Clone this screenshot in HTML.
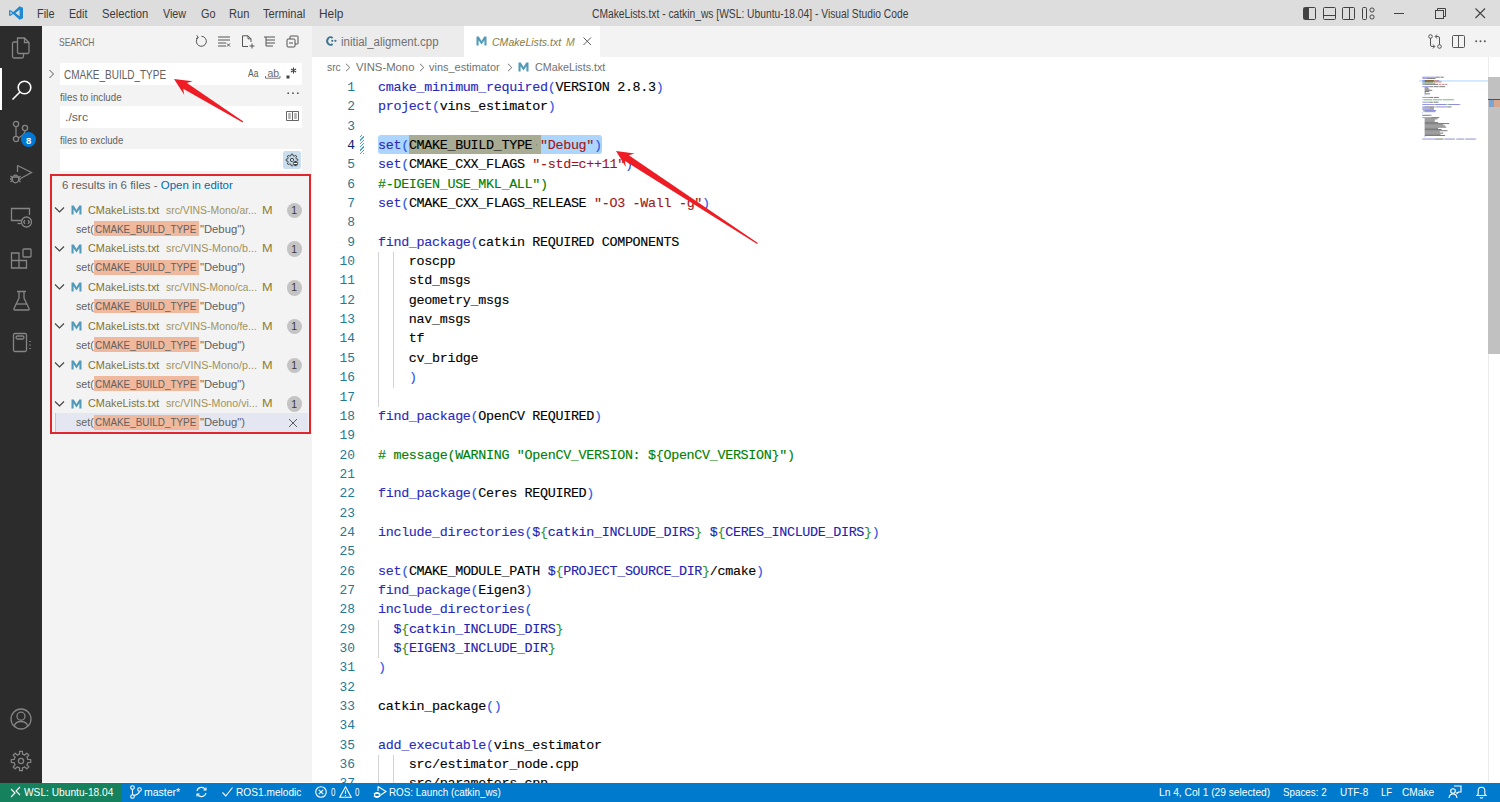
<!DOCTYPE html><html><head><meta charset="utf-8"><style>
*{margin:0;padding:0;box-sizing:border-box}
html,body{width:1500px;height:802px;overflow:hidden;background:#fff;font-family:"Liberation Sans",sans-serif}
.a{position:absolute}
.t{position:absolute;white-space:nowrap}
svg{position:absolute;overflow:visible}
#title{left:0;top:0;width:1500px;height:26px;background:#dddddd}
.menu{top:6px;font-size:12px;color:#3b3b3b}
#act{left:0;top:26px;width:42px;height:757px;background:#2c2c2c}
#side{left:42px;top:26px;width:270px;height:756px;background:#f3f3f3}
#tabs{left:312px;top:26px;width:1188px;height:31px;background:#f3f3f3}
#editor{left:312px;top:57px;width:1188px;height:725px;background:#fff}
#status{left:0;top:783px;width:1500px;height:19px;background:#007acc}
.st{top:785px;font-size:11.5px;color:#fff}
.code{position:absolute;left:378px;top:78px;font-family:"Liberation Mono",monospace;font-size:13.4px;letter-spacing:-0.3208px;line-height:19.35px;white-space:pre;color:#000;-webkit-text-stroke:0.12px currentColor}
.ln{position:absolute;left:312px;width:43px;top:78px;font-family:"Liberation Mono",monospace;font-size:12.87px;line-height:19.35px;white-space:pre;color:#237893;text-align:right}
.f{color:#2a2abb}
.p{color:#2f55e8}
.s{color:#a31515}
.c{color:#008000}
.v{color:#2323b0}
.g{color:#319331}
.sb{font-size:12px;color:#616161}
.fn{font-size:12px;color:#895503}
.path{font-size:11px;color:#8a7a45}
.mt{font-size:12px;color:#616161}
.hl{background:#f5c0a0}
</style></head><body>
<div id="title" class="a"></div>
<svg style="left:8px;top:5px" width="16" height="16" viewBox="0 0 16 16"><path d="M11.6 1.2 L15 2.8 V13.2 L11.6 14.8 L5.2 8.9 L2.3 11.1 L1 10.4 V5.6 L2.3 4.9 L5.2 7.1 Z M11.6 4.8 L7.4 8 L11.6 11.2 Z M2.4 6.3 V9.7 L4.1 8 Z" fill="#1f8ad2"/></svg>
<span class="t" style="left:37.39px;top:6.70px;font-size:12px;color:#3b3b3b;transform:scaleX(0.9111);transform-origin:0 0;">File</span>
<span class="t" style="left:69.01px;top:6.70px;font-size:12px;color:#3b3b3b;transform:scaleX(0.8900);transform-origin:0 0;">Edit</span>
<span class="t" style="left:101.76px;top:6.70px;font-size:12px;color:#3b3b3b;transform:scaleX(0.9375);transform-origin:0 0;">Selection</span>
<span class="t" style="left:162.70px;top:6.70px;font-size:12px;color:#3b3b3b;transform:scaleX(0.8962);transform-origin:0 0;">View</span>
<span class="t" style="left:200.50px;top:6.70px;font-size:12px;color:#3b3b3b;transform:scaleX(0.9062);transform-origin:0 0;">Go</span>
<span class="t" style="left:228.67px;top:6.70px;font-size:12px;color:#3b3b3b;transform:scaleX(0.9250);transform-origin:0 0;">Run</span>
<span class="t" style="left:263.20px;top:6.70px;font-size:12px;color:#3b3b3b;transform:scaleX(0.9289);transform-origin:0 0;">Terminal</span>
<span class="t" style="left:319.01px;top:6.70px;font-size:12px;color:#3b3b3b;transform:scaleX(0.9913);transform-origin:0 0;">Help</span>
<span class="t" style="left:591.60px;top:6.70px;font-size:12px;color:#3b3b3b;transform:scaleX(0.8551);transform-origin:0 0;">CMakeLists.txt - catkin_ws [WSL: Ubuntu-18.04] - Visual Studio Code</span>
<svg style="left:1303px;top:7px" width="13" height="13"><rect x="0.5" y="0.5" width="12" height="12" rx="1" fill="none" stroke="#424242"/><rect x="1" y="1" width="5" height="11" fill="#424242"/></svg>
<svg style="left:1323px;top:7px" width="13" height="13"><rect x="0.5" y="0.5" width="12" height="12" rx="1" fill="none" stroke="#424242"/><line x1="1" y1="8.5" x2="12" y2="8.5" stroke="#424242"/></svg>
<svg style="left:1342px;top:7px" width="13" height="13"><rect x="0.5" y="0.5" width="12" height="12" rx="1" fill="none" stroke="#424242"/><line x1="7.5" y1="1" x2="7.5" y2="12" stroke="#424242"/></svg>
<svg style="left:1362px;top:7px" width="13" height="13"><rect x="0.5" y="0.5" width="4" height="12" rx="1" fill="none" stroke="#424242"/><rect x="8" y="1" width="4" height="4" rx="1.8" fill="none" stroke="#424242"/><rect x="8" y="8" width="4" height="4" rx="1.8" fill="none" stroke="#424242"/></svg>
<svg style="left:1394px;top:13px" width="11" height="2"><line x1="0" y1="0.5" x2="10" y2="0.5" stroke="#424242"/></svg>
<svg style="left:1435px;top:8px" width="12" height="12"><rect x="0.5" y="2.5" width="8" height="8" fill="none" stroke="#424242"/><path d="M2.5 2.5 V0.5 H10.5 V8.5 H8.5" fill="none" stroke="#424242"/></svg>
<svg style="left:1475px;top:8px" width="11" height="11"><path d="M0.5 0.5 L10 10 M10 0.5 L0.5 10" stroke="#424242" stroke-width="1.1"/></svg>
<div id="act" class="a"></div>
<svg style="left:11px;top:37px" width="20" height="22" viewBox="0 0 20 22" fill="none" stroke="#858585" stroke-width="1.3"><path d="M6.5 1 H13.5 L18 5.5 V15 Q18 16.5 16.5 16.5 H8 Q6.5 16.5 6.5 15 Z"/><path d="M13.5 1 V5.5 H18"/><path d="M6.5 5 H3 Q1.5 5 1.5 6.5 V19.5 Q1.5 21 3 21 H11 Q12.5 21 12.5 19.5 V16.5"/></svg>
<div class="a" style="left:0;top:68px;width:2px;height:42px;background:#fff"></div>
<svg style="left:11px;top:79px" width="22" height="22" viewBox="0 0 22 22" fill="none" stroke="#fff" stroke-width="1.6"><circle cx="13.5" cy="8.5" r="6.3"/><line x1="9" y1="13" x2="1.5" y2="20.5"/></svg>
<svg style="left:11px;top:119px" width="22" height="24" viewBox="0 0 22 24" fill="none" stroke="#858585" stroke-width="1.3"><circle cx="5" cy="5" r="2.6"/><circle cx="14" cy="9" r="2.6"/><circle cx="5" cy="20" r="2.6"/><line x1="5" y1="7.6" x2="5" y2="17.4"/><path d="M14 11.6 Q14 15.5 7.5 19"/></svg>
<div class="a" style="left:21px;top:132px;width:15px;height:15px;border-radius:50%;background:#0078d4"></div>
<span class="t" style="left:26.00px;top:134.50px;font-size:9.5px;color:#fff;font-weight:bold;">8</span>
<svg style="left:9px;top:162px" width="26" height="24" viewBox="0 0 26 24" fill="none" stroke="#858585" stroke-width="1.3"><path d="M8.5 3.5 L22.5 10.5 L11.5 16.5"/><path d="M8.5 3.5 V10"/><ellipse cx="6.5" cy="17" rx="3.2" ry="3.8"/><path d="M3.3 15 H9.7 M1.5 14 L3.3 15.5 M1.5 20 L3.3 18.5 M11.5 14 L9.7 15.5 M11.5 20 L9.7 18.5 M1 17 H3.3 M9.7 17 H12"/></svg>
<svg style="left:10px;top:207px" width="24" height="22" viewBox="0 0 24 22" fill="none" stroke="#858585" stroke-width="1.3"><path d="M12 13.5 H1.5 V1.5 H19.5 V8"/><path d="M7.5 16.5 H11"/><circle cx="16.5" cy="15" r="5"/><path d="M15 13.2 L13.7 15 L15 16.8 M18 13.2 L19.3 15 L18 16.8"/></svg>
<svg style="left:10px;top:247px" width="24" height="24" viewBox="0 0 24 24" fill="none" stroke="#858585" stroke-width="1.3"><path d="M1.5 6 H9 V13.5 H16.5 V21 H1.5 Z M1.5 13.5 H9 V21"/><rect x="13" y="2" width="8" height="8" rx="0.8"/></svg>
<svg style="left:12px;top:290px" width="20" height="22" viewBox="0 0 20 22" fill="none" stroke="#858585" stroke-width="1.3"><path d="M5 1.5 H14 M7 1.5 V8 L2 18.5 Q1.5 20 3 20 H16 Q17.5 20 17 18.5 L12 8 V1.5"/><path d="M4 14 H15"/></svg>
<svg style="left:12px;top:332px" width="22" height="22" viewBox="0 0 22 22" fill="none" stroke="#858585" stroke-width="1.3"><rect x="1.5" y="1.5" width="13" height="18" rx="1.5"/><rect x="4" y="4" width="8" height="3" rx="1.5"/><path d="M18 9 V10 M18 12.5 V13.5 M18 16 V17" stroke-width="1.6"/></svg>
<svg style="left:10px;top:708px" width="22" height="22" viewBox="0 0 22 22" fill="none" stroke="#858585" stroke-width="1.3"><circle cx="11" cy="11" r="10"/><circle cx="11" cy="8.2" r="4"/><path d="M4.3 17.8 Q5.5 13.5 11 13.5 Q16.5 13.5 17.7 17.8"/></svg>
<svg style="left:10px;top:750px" width="22" height="22" viewBox="0 0 22 22" fill="none" stroke="#858585" stroke-width="1.3"><polygon points="8.32,4.53 9.47,4.17 9.62,1.30 12.38,1.30 12.53,4.17 13.68,4.53 14.75,5.09 16.88,3.16 18.84,5.12 16.91,7.25 17.47,8.32 17.83,9.47 20.70,9.62 20.70,12.38 17.83,12.53 17.47,13.68 16.91,14.75 18.84,16.88 16.88,18.84 14.75,16.91 13.68,17.47 12.53,17.83 12.38,20.70 9.62,20.70 9.47,17.83 8.32,17.47 7.25,16.91 5.12,18.84 3.16,16.88 5.09,14.75 4.53,13.68 4.17,12.53 1.30,12.38 1.30,9.62 4.17,9.47 4.53,8.32 5.09,7.25 3.16,5.12 5.12,3.16 7.25,5.09" stroke-linejoin="round"/><circle cx="11" cy="11" r="2.6"/></svg>
<div id="side" class="a"></div>
<span class="t" style="left:59.19px;top:35.70px;font-size:10.5px;color:#6f6f6f;transform:scaleX(0.8119);transform-origin:0 0;">SEARCH</span>
<svg style="left:195px;top:35px" width="13" height="13" viewBox="0 0 13 13" fill="none" stroke="#555555" stroke-width="1"><path d="M3 2.6 A5 5 0 1 0 6.5 1.3"/><path d="M1.8 0.3 L3.3 2.6 L1 3.6"/></svg>
<svg style="left:217px;top:36px" width="14" height="12" viewBox="0 0 14 12" fill="none" stroke="#555555" stroke-width="1"><path d="M1 1 H13 M1 4 H13 M1 7 H9 M1 10 H9 M10 7.5 L13 10.5 M13 7.5 L10 10.5"/></svg>
<svg style="left:241px;top:35px" width="14" height="14" viewBox="0 0 14 14" fill="none" stroke="#555555" stroke-width="1"><path d="M7 11.5 H1.5 V0.8 H7 L10 3.8 V7"/><path d="M7 0.8 V3.8 H10"/><path d="M11 8.5 V13.5 M8.5 11 H13.5"/></svg>
<svg style="left:263px;top:36px" width="13" height="12" viewBox="0 0 13 12" fill="none" stroke="#555555" stroke-width="1"><path d="M1 1 H12 M3 4 H12 M3 7 H12 M3 10 H10 M3 1 V10"/></svg>
<svg style="left:286px;top:35px" width="13" height="13" viewBox="0 0 13 13" fill="none" stroke="#555555" stroke-width="1"><rect x="1" y="4" width="8" height="8" rx="1"/><path d="M4 4 V1.5 Q4 1 4.5 1 H11.5 Q12 1 12 1.5 V8.5 Q12 9 11.5 9 H9"/><path d="M3 8 H7"/></svg>
<svg style="left:48px;top:69px" width="7" height="10" viewBox="0 0 7 10" fill="none" stroke="#555555" stroke-width="1"><path d="M1.5 1 L5.5 5 L1.5 9"/></svg>
<div class="a" style="left:60px;top:63px;width:242px;height:22px;background:#fff"></div>
<span class="t" style="left:64.40px;top:67.90px;font-size:12px;color:#616161;transform:scaleX(0.8320);transform-origin:0 0;">CMAKE_BUILD_TYPE</span>
<span class="t" style="left:248.40px;top:67.00px;font-size:11px;color:#5a5a5a;transform:scaleX(0.7692);transform-origin:0 0;">Aa</span>
<svg style="left:265px;top:67px" width="16" height="13" viewBox="0 0 16 13"><text x="2.5" y="9.5" font-family="Liberation Sans" font-size="10.5" fill="#6a6a6a">ab</text><path d="M0.5 9 V11.2 H15 V9" fill="none" stroke="#6a6a6a" stroke-width="0.9"/></svg>
<svg style="left:286px;top:66px" width="12" height="14" viewBox="0 0 12 14"><rect x="0.5" y="9.5" width="3" height="3" fill="#424242"/><path d="M7.5 1.5 V7.5 M4.9 3 L10.1 6 M10.1 3 L4.9 6" stroke="#424242" stroke-width="1.1"/></svg>
<svg style="left:287px;top:92px" width="12" height="3"><circle cx="1.2" cy="1.2" r="0.9" fill="#555555"/><circle cx="6" cy="1.2" r="0.9" fill="#555555"/><circle cx="10.8" cy="1.2" r="0.9" fill="#555555"/></svg>
<span class="t" style="left:60.10px;top:91.60px;font-size:10px;color:#616161;transform:scaleX(0.9714);transform-origin:0 0;">files to include</span>
<div class="a" style="left:60px;top:106px;width:242px;height:22px;background:#fff"></div>
<span class="t" style="left:64.84px;top:111.20px;font-size:10.5px;color:#616161;transform:scaleX(1.1611);transform-origin:0 0;">./src</span>
<svg style="left:285.5px;top:111px" width="13" height="10" viewBox="0 0 13 10" fill="none" stroke="#555555" stroke-width="0.9"><path d="M0.5 0.5 H6 Q6.5 0.5 6.5 1 Q6.5 0.5 7 0.5 H12.5 V9.5 H0.5 Z M6.5 1 V9.5"/><path d="M2.2 3 H4.8 M2.2 5 H4.8 M2.2 7 H4.8 M8.2 3 H10.8 M8.2 5 H10.8 M8.2 7 H10.8"/></svg>
<span class="t" style="left:60.00px;top:135.00px;font-size:10px;color:#616161;transform:scaleX(0.9561);transform-origin:0 0;">files to exclude</span>
<div class="a" style="left:60px;top:149px;width:242px;height:22px;background:#fff"></div>
<div class="a" style="left:283px;top:151px;width:18px;height:18px;background:#c9dff0;border-radius:2px"></div>
<svg style="left:285px;top:153px" width="14" height="14" viewBox="0 0 14 14" fill="none" stroke="#424242" stroke-width="1"><polygon points="6.41,1.03 7.59,1.03 8.25,2.89 9.03,3.21 10.81,2.36 11.64,3.19 10.79,4.97 11.11,5.75 12.97,6.41 12.97,7.59 11.11,8.25 10.79,9.03 11.64,10.81 10.81,11.64 9.03,10.79 8.25,11.11 7.59,12.97 6.41,12.97 5.75,11.11 4.97,10.79 3.19,11.64 2.36,10.81 3.21,9.03 2.89,8.25 1.03,7.59 1.03,6.41 2.89,5.75 3.21,4.97 2.36,3.19 3.19,2.36 4.97,3.21 5.75,2.89"/><circle cx="7" cy="7" r="1.7"/><circle cx="10.5" cy="10.5" r="3" fill="#424242" stroke="#c9dff0"/><path d="M8.8 10.5 H12.2" stroke="#fff"/></svg>
<span class="t" style="left:61.70px;top:178.90px;font-size:10.5px;color:#616161;transform:scaleX(1.0917);transform-origin:0 0;">6 results in 6 files - <span style="color:#006ab1">Open in editor</span></span>
<svg style="left:54px;top:206.00px" width="11" height="8" viewBox="0 0 11 8" fill="none" stroke="#424242" stroke-width="1.1"><path d="M1 1.5 L5.5 6 L10 1.5"/></svg>
<svg style="left:71px;top:205.00px" width="11" height="10" viewBox="0 0 11 10"><path d="M0.5 9.5 V0.5 H2.7 L5.5 5 L8.3 0.5 H10.5 V9.5 H8.4 V4.2 L5.5 8.5 L2.6 4.2 V9.5 Z" fill="#519aba"/></svg>
<span class="t" style="left:88.10px;top:203.70px;font-size:10.5px;color:#847433;transform:scaleX(1.0362);transform-origin:0 0;">CMakeLists.txt</span>
<span class="t" style="left:165.50px;top:204.70px;font-size:10px;color:#a0925c;transform:scaleX(1.0402);transform-origin:0 0;">src/VINS-Mono/ar...</span>
<span class="t" style="left:262.29px;top:203.70px;font-size:10.5px;color:#8f7d2e;transform:scaleX(1.2143);transform-origin:0 0;">M</span>
<div class="a" style="left:286.5px;top:202.70px;width:15.5px;height:15.5px;border-radius:50%;background:#c4c4c4"></div>
<span class="t" style="left:291.20px;top:204.00px;font-size:10.5px;color:#3a3a3a;">1</span>
<div class="a" style="left:93.8px;top:221.30px;width:105.7px;height:14.8px;background:#f0b99e"></div>
<span class="t" style="left:76.00px;top:222.70px;font-size:10.5px;color:#616161;transform:scaleX(1.0176);transform-origin:0 0;">set(</span>
<span class="t" style="left:94.60px;top:222.70px;font-size:10.5px;color:#616161;transform:scaleX(0.9430);transform-origin:0 0;">CMAKE_BUILD_TYPE</span>
<span class="t" style="left:200.00px;top:222.70px;font-size:10.5px;color:#616161;transform:scaleX(1.0714);transform-origin:0 0;">"Debug")</span>
<svg style="left:54px;top:244.70px" width="11" height="8" viewBox="0 0 11 8" fill="none" stroke="#424242" stroke-width="1.1"><path d="M1 1.5 L5.5 6 L10 1.5"/></svg>
<svg style="left:71px;top:243.70px" width="11" height="10" viewBox="0 0 11 10"><path d="M0.5 9.5 V0.5 H2.7 L5.5 5 L8.3 0.5 H10.5 V9.5 H8.4 V4.2 L5.5 8.5 L2.6 4.2 V9.5 Z" fill="#519aba"/></svg>
<span class="t" style="left:88.10px;top:242.40px;font-size:10.5px;color:#847433;transform:scaleX(1.0362);transform-origin:0 0;">CMakeLists.txt</span>
<span class="t" style="left:165.50px;top:243.40px;font-size:10px;color:#a0925c;transform:scaleX(1.0774);transform-origin:0 0;">src/VINS-Mono/b...</span>
<span class="t" style="left:262.29px;top:242.40px;font-size:10.5px;color:#8f7d2e;transform:scaleX(1.2143);transform-origin:0 0;">M</span>
<div class="a" style="left:286.5px;top:241.40px;width:15.5px;height:15.5px;border-radius:50%;background:#c4c4c4"></div>
<span class="t" style="left:291.20px;top:242.70px;font-size:10.5px;color:#3a3a3a;">1</span>
<div class="a" style="left:93.8px;top:260.00px;width:105.7px;height:14.8px;background:#f0b99e"></div>
<span class="t" style="left:76.00px;top:261.40px;font-size:10.5px;color:#616161;transform:scaleX(1.0176);transform-origin:0 0;">set(</span>
<span class="t" style="left:94.60px;top:261.40px;font-size:10.5px;color:#616161;transform:scaleX(0.9430);transform-origin:0 0;">CMAKE_BUILD_TYPE</span>
<span class="t" style="left:200.00px;top:261.40px;font-size:10.5px;color:#616161;transform:scaleX(1.0714);transform-origin:0 0;">"Debug")</span>
<svg style="left:54px;top:283.40px" width="11" height="8" viewBox="0 0 11 8" fill="none" stroke="#424242" stroke-width="1.1"><path d="M1 1.5 L5.5 6 L10 1.5"/></svg>
<svg style="left:71px;top:282.40px" width="11" height="10" viewBox="0 0 11 10"><path d="M0.5 9.5 V0.5 H2.7 L5.5 5 L8.3 0.5 H10.5 V9.5 H8.4 V4.2 L5.5 8.5 L2.6 4.2 V9.5 Z" fill="#519aba"/></svg>
<span class="t" style="left:88.10px;top:281.10px;font-size:10.5px;color:#847433;transform:scaleX(1.0362);transform-origin:0 0;">CMakeLists.txt</span>
<span class="t" style="left:165.50px;top:282.10px;font-size:10px;color:#a0925c;transform:scaleX(1.0169);transform-origin:0 0;">src/VINS-Mono/ca...</span>
<span class="t" style="left:262.29px;top:281.10px;font-size:10.5px;color:#8f7d2e;transform:scaleX(1.2143);transform-origin:0 0;">M</span>
<div class="a" style="left:286.5px;top:280.10px;width:15.5px;height:15.5px;border-radius:50%;background:#c4c4c4"></div>
<span class="t" style="left:291.20px;top:281.40px;font-size:10.5px;color:#3a3a3a;">1</span>
<div class="a" style="left:93.8px;top:298.70px;width:105.7px;height:14.8px;background:#f0b99e"></div>
<span class="t" style="left:76.00px;top:300.10px;font-size:10.5px;color:#616161;transform:scaleX(1.0176);transform-origin:0 0;">set(</span>
<span class="t" style="left:94.60px;top:300.10px;font-size:10.5px;color:#616161;transform:scaleX(0.9430);transform-origin:0 0;">CMAKE_BUILD_TYPE</span>
<span class="t" style="left:200.00px;top:300.10px;font-size:10.5px;color:#616161;transform:scaleX(1.0714);transform-origin:0 0;">"Debug")</span>
<svg style="left:54px;top:322.10px" width="11" height="8" viewBox="0 0 11 8" fill="none" stroke="#424242" stroke-width="1.1"><path d="M1 1.5 L5.5 6 L10 1.5"/></svg>
<svg style="left:71px;top:321.10px" width="11" height="10" viewBox="0 0 11 10"><path d="M0.5 9.5 V0.5 H2.7 L5.5 5 L8.3 0.5 H10.5 V9.5 H8.4 V4.2 L5.5 8.5 L2.6 4.2 V9.5 Z" fill="#519aba"/></svg>
<span class="t" style="left:88.10px;top:319.80px;font-size:10.5px;color:#847433;transform:scaleX(1.0362);transform-origin:0 0;">CMakeLists.txt</span>
<span class="t" style="left:165.50px;top:320.80px;font-size:10px;color:#a0925c;transform:scaleX(1.0402);transform-origin:0 0;">src/VINS-Mono/fe...</span>
<span class="t" style="left:262.29px;top:319.80px;font-size:10.5px;color:#8f7d2e;transform:scaleX(1.2143);transform-origin:0 0;">M</span>
<div class="a" style="left:286.5px;top:318.80px;width:15.5px;height:15.5px;border-radius:50%;background:#c4c4c4"></div>
<span class="t" style="left:291.20px;top:320.10px;font-size:10.5px;color:#3a3a3a;">1</span>
<div class="a" style="left:93.8px;top:337.40px;width:105.7px;height:14.8px;background:#f0b99e"></div>
<span class="t" style="left:76.00px;top:338.80px;font-size:10.5px;color:#616161;transform:scaleX(1.0176);transform-origin:0 0;">set(</span>
<span class="t" style="left:94.60px;top:338.80px;font-size:10.5px;color:#616161;transform:scaleX(0.9430);transform-origin:0 0;">CMAKE_BUILD_TYPE</span>
<span class="t" style="left:200.00px;top:338.80px;font-size:10.5px;color:#616161;transform:scaleX(1.0714);transform-origin:0 0;">"Debug")</span>
<svg style="left:54px;top:360.80px" width="11" height="8" viewBox="0 0 11 8" fill="none" stroke="#424242" stroke-width="1.1"><path d="M1 1.5 L5.5 6 L10 1.5"/></svg>
<svg style="left:71px;top:359.80px" width="11" height="10" viewBox="0 0 11 10"><path d="M0.5 9.5 V0.5 H2.7 L5.5 5 L8.3 0.5 H10.5 V9.5 H8.4 V4.2 L5.5 8.5 L2.6 4.2 V9.5 Z" fill="#519aba"/></svg>
<span class="t" style="left:88.10px;top:358.50px;font-size:10.5px;color:#847433;transform:scaleX(1.0362);transform-origin:0 0;">CMakeLists.txt</span>
<span class="t" style="left:165.50px;top:359.50px;font-size:10px;color:#a0925c;transform:scaleX(1.0774);transform-origin:0 0;">src/VINS-Mono/p...</span>
<span class="t" style="left:262.29px;top:358.50px;font-size:10.5px;color:#8f7d2e;transform:scaleX(1.2143);transform-origin:0 0;">M</span>
<div class="a" style="left:286.5px;top:357.50px;width:15.5px;height:15.5px;border-radius:50%;background:#c4c4c4"></div>
<span class="t" style="left:291.20px;top:358.80px;font-size:10.5px;color:#3a3a3a;">1</span>
<div class="a" style="left:93.8px;top:376.10px;width:105.7px;height:14.8px;background:#f0b99e"></div>
<span class="t" style="left:76.00px;top:377.50px;font-size:10.5px;color:#616161;transform:scaleX(1.0176);transform-origin:0 0;">set(</span>
<span class="t" style="left:94.60px;top:377.50px;font-size:10.5px;color:#616161;transform:scaleX(0.9430);transform-origin:0 0;">CMAKE_BUILD_TYPE</span>
<span class="t" style="left:200.00px;top:377.50px;font-size:10.5px;color:#616161;transform:scaleX(1.0714);transform-origin:0 0;">"Debug")</span>
<div class="a" style="left:55px;top:413px;width:253px;height:19px;background:#e4e6f1"></div>
<svg style="left:54px;top:399.50px" width="11" height="8" viewBox="0 0 11 8" fill="none" stroke="#424242" stroke-width="1.1"><path d="M1 1.5 L5.5 6 L10 1.5"/></svg>
<svg style="left:71px;top:398.50px" width="11" height="10" viewBox="0 0 11 10"><path d="M0.5 9.5 V0.5 H2.7 L5.5 5 L8.3 0.5 H10.5 V9.5 H8.4 V4.2 L5.5 8.5 L2.6 4.2 V9.5 Z" fill="#519aba"/></svg>
<span class="t" style="left:88.10px;top:397.20px;font-size:10.5px;color:#847433;transform:scaleX(1.0362);transform-origin:0 0;">CMakeLists.txt</span>
<span class="t" style="left:165.50px;top:398.20px;font-size:10px;color:#a0925c;transform:scaleX(1.0647);transform-origin:0 0;">src/VINS-Mono/vi...</span>
<span class="t" style="left:262.29px;top:397.20px;font-size:10.5px;color:#8f7d2e;transform:scaleX(1.2143);transform-origin:0 0;">M</span>
<div class="a" style="left:286.5px;top:396.20px;width:15.5px;height:15.5px;border-radius:50%;background:#c4c4c4"></div>
<span class="t" style="left:291.20px;top:397.50px;font-size:10.5px;color:#3a3a3a;">1</span>
<div class="a" style="left:93.8px;top:414.80px;width:105.7px;height:14.8px;background:#f0b99e"></div>
<span class="t" style="left:76.00px;top:416.20px;font-size:10.5px;color:#616161;transform:scaleX(1.0176);transform-origin:0 0;">set(</span>
<span class="t" style="left:94.60px;top:416.20px;font-size:10.5px;color:#616161;transform:scaleX(0.9430);transform-origin:0 0;">CMAKE_BUILD_TYPE</span>
<span class="t" style="left:200.00px;top:416.20px;font-size:10.5px;color:#616161;transform:scaleX(1.0714);transform-origin:0 0;">"Debug")</span>
<svg style="left:288px;top:417.85px" width="10" height="10" viewBox="0 0 10 10" fill="none" stroke="#555" stroke-width="0.95"><path d="M1 1 L9 9 M9 1 L1 9"/></svg>
<div class="a" style="left:50px;top:174px;width:261px;height:260px;border:2px solid #e0262d"></div>
<div id="tabs" class="a"></div>
<div class="a" style="left:312px;top:26px;width:152px;height:31px;background:#ececec"></div>
<div class="a" style="left:464px;top:26px;width:136px;height:31px;background:#fff"></div>
<svg style="left:326px;top:36px" width="12" height="10" viewBox="0 0 12 10"><path d="M6.6 2 A3.3 3.9 0 1 0 6.6 8" fill="none" stroke="#3f7590" stroke-width="1.9"/><circle cx="6.3" cy="4.8" r="1.1" fill="#3f7590"/><circle cx="9.4" cy="4.8" r="1.1" fill="#3f7590"/></svg>
<span class="t" style="left:340.54px;top:35.20px;font-size:12px;color:#717171;transform:scaleX(0.9554);transform-origin:0 0;">initial_aligment.cpp</span>
<svg style="left:476px;top:36px" width="11" height="10" viewBox="0 0 11 10"><path d="M0.5 9.5 V0.5 H2.7 L5.5 5 L8.3 0.5 H10.5 V9.5 H8.4 V4.2 L5.5 8.5 L2.6 4.2 V9.5 Z" fill="#519aba"/></svg>
<span class="t" style="left:491.58px;top:36.10px;font-size:11.5px;color:#877a48;font-style:italic;transform:scaleX(0.9173);transform-origin:0 0;">CMakeLists.txt</span>
<span class="t" style="left:566.00px;top:36.10px;font-size:11.5px;color:#9a8a45;font-style:italic;transform:scaleX(0.9200);transform-origin:0 0;">M</span>
<svg style="left:583px;top:37px" width="9" height="9" viewBox="0 0 9 9" fill="none" stroke="#555" stroke-width="0.95"><path d="M0.5 0.5 L8 8 M8 0.5 L0.5 8"/></svg>
<svg style="left:1428px;top:34px" width="14" height="15" viewBox="0 0 14 15" fill="none" stroke="#555555" stroke-width="1"><circle cx="2.5" cy="2.5" r="1.8"/><circle cx="11.5" cy="12.5" r="1.8"/><path d="M2.5 4.3 V11 Q2.5 12.5 4 12.5 H6.5 M5 10.5 L6.8 12.5 L5 14.5"/><path d="M11.5 10.7 V4 Q11.5 2.5 10 2.5 H7.5 M9 0.5 L7.2 2.5 L9 4.5"/></svg>
<svg style="left:1452px;top:35px" width="13" height="13" viewBox="0 0 13 13" fill="none" stroke="#555555" stroke-width="1"><rect x="0.5" y="0.5" width="12" height="12" rx="1"/><path d="M6.5 0.5 V12.5"/></svg>
<svg style="left:1475px;top:40px" width="11" height="3"><circle cx="1.2" cy="1.2" r="1" fill="#555555"/><circle cx="5.5" cy="1.2" r="1" fill="#555555"/><circle cx="9.8" cy="1.2" r="1" fill="#555555"/></svg>
<div id="editor" class="a"></div>
<span class="t" style="left:327.00px;top:61.30px;font-size:11.5px;color:#717171;transform:scaleX(0.9000);transform-origin:0 0;">src</span>
<svg style="left:345px;top:63px" width="6" height="9" viewBox="0 0 6 9" fill="none" stroke="#717171" stroke-width="1"><path d="M1 0.8 L4.8 4.5 L1 8.2"/></svg>
<svg style="left:419px;top:63px" width="6" height="9" viewBox="0 0 6 9" fill="none" stroke="#717171" stroke-width="1"><path d="M1 0.8 L4.8 4.5 L1 8.2"/></svg>
<svg style="left:507px;top:63px" width="6" height="9" viewBox="0 0 6 9" fill="none" stroke="#717171" stroke-width="1"><path d="M1 0.8 L4.8 4.5 L1 8.2"/></svg>
<span class="t" style="left:356.00px;top:61.30px;font-size:11.5px;color:#717171;transform:scaleX(0.9831);transform-origin:0 0;">VINS-Mono</span>
<span class="t" style="left:429.00px;top:61.30px;font-size:11.5px;color:#717171;transform:scaleX(0.9527);transform-origin:0 0;">vins_estimator</span>
<svg style="left:518px;top:62px" width="11" height="10" viewBox="0 0 11 10"><path d="M0.5 9.5 V0.5 H2.7 L5.5 5 L8.3 0.5 H10.5 V9.5 H8.4 V4.2 L5.5 8.5 L2.6 4.2 V9.5 Z" fill="#519aba"/></svg>
<span class="t" style="left:534.70px;top:61.30px;font-size:11.5px;color:#717171;transform:scaleX(0.9329);transform-origin:0 0;">CMakeLists.txt</span>
<div class="a" style="left:378px;top:135.05px;width:224px;height:19.35px;background:#add6ff;border-radius:3px"></div>
<div class="a" style="left:409px;top:135.05px;width:132px;height:19.35px;background:#a8ac94"></div>
<div class="a" style="left:535.5px;top:144.45px;width:1.6px;height:1.6px;background:#8a8a7a;border-radius:50%"></div>
<div class="a" style="left:55px;top:413px;width:1px;height:19px;background:#c8c8c8"></div>
<div class="a" style="left:359.5px;top:135.05px;width:4px;height:19.35px;background:repeating-linear-gradient(-45deg,#4aa3cf 0 1px,#fff 1px 2.4px)"></div>
<div class="a" style="left:378px;top:252.15px;width:1px;height:154.80px;background:#d3d3d3"></div>
<div class="a" style="left:393px;top:252.15px;width:1px;height:135.45px;background:#d3d3d3"></div>
<div class="a" style="left:378px;top:619.80px;width:1px;height:38.70px;background:#d3d3d3"></div>
<div class="a" style="left:378px;top:755.25px;width:1px;height:38.70px;background:#d3d3d3"></div>
<div class="a" style="left:393px;top:755.25px;width:1px;height:38.70px;background:#d3d3d3"></div>
<div class="ln">1
2
3
<span style="color:#0b216f">4</span>
5
6
7
8
9
10
11
12
13
14
15
16
17
18
19
20
21
22
23
24
25
26
27
28
29
30
31
32
33
34
35
36
37</div>
<div class="code"><span class="f">cmake_minimum_required</span><span class="p">(</span>VERSION 2.8.3<span class="p">)</span>
<span class="f">project</span><span class="p">(</span>vins_estimator<span class="p">)</span>

<span class="f">set</span><span class="p">(</span>CMAKE_BUILD_TYPE <span class="s">"Debug"</span><span class="p">)</span>
<span class="f">set</span><span class="p">(</span>CMAKE_CXX_FLAGS <span class="s">"-std=c++11"</span><span class="p">)</span>
<span class="c">#-DEIGEN_USE_MKL_ALL")</span>
<span class="f">set</span><span class="p">(</span>CMAKE_CXX_FLAGS_RELEASE <span class="s">"-O3 -Wall -g"</span><span class="p">)</span>

<span class="f">find_package</span><span class="p">(</span>catkin REQUIRED COMPONENTS
    roscpp
    std_msgs
    geometry_msgs
    nav_msgs
    tf
    cv_bridge
    <span class="p">)</span>

<span class="f">find_package</span><span class="p">(</span>OpenCV REQUIRED<span class="p">)</span>

<span class="c"># message(WARNING "OpenCV_VERSION: ${OpenCV_VERSION}")</span>

<span class="f">find_package</span><span class="p">(</span>Ceres REQUIRED<span class="p">)</span>

<span class="f">include_directories</span><span class="p">(</span><span class="v">$<span class="g">{</span>catkin_INCLUDE_DIRS<span class="g">}</span></span> <span class="v">$<span class="g">{</span>CERES_INCLUDE_DIRS<span class="g">}</span></span><span class="p">)</span>

<span class="f">set</span><span class="p">(</span>CMAKE_MODULE_PATH <span class="v">$<span class="g">{</span>PROJECT_SOURCE_DIR<span class="g">}</span></span>/cmake<span class="p">)</span>
<span class="f">find_package</span><span class="p">(</span>Eigen3<span class="p">)</span>
<span class="f">include_directories</span><span class="p">(</span>
  <span class="v">$<span class="g">{</span>catkin_INCLUDE_DIRS<span class="g">}</span></span>
  <span class="v">$<span class="g">{</span>EIGEN3_INCLUDE_DIR<span class="g">}</span></span>
<span class="p">)</span>

catkin_package<span class="p">()</span>

<span class="f">add_executable</span><span class="p">(</span>vins_estimator
    src/estimator_node.cpp
    src/parameters.cpp</div>
<div class="a" style="left:1488px;top:57px;width:1px;height:725px;background:#ececec"></div>
<div class="a" style="left:1488px;top:77px;width:12px;height:277px;background:#c1c1c1"></div>
<svg style="left:0;top:0" width="1500" height="802"><rect x="1419" y="80.17" width="69" height="1.49" fill="#add6ff" opacity="0.7"/><rect x="1424.64" y="80.17" width="9.95" height="1.49" fill="#e8a040" opacity="0.9"/><rect x="1422.30" y="76.70" width="12.87" height="0.95" fill="#3434c8" opacity="0.55"/><rect x="1435.17" y="76.70" width="0.58" height="0.95" fill="#0431fa" opacity="0.55"/><rect x="1435.75" y="76.70" width="4.09" height="0.95" fill="#000000" opacity="0.55"/><rect x="1440.43" y="76.70" width="2.92" height="0.95" fill="#000000" opacity="0.55"/><rect x="1443.36" y="76.70" width="0.58" height="0.95" fill="#0431fa" opacity="0.55"/><rect x="1422.30" y="77.89" width="4.09" height="0.95" fill="#3434c8" opacity="0.55"/><rect x="1426.39" y="77.89" width="0.58" height="0.95" fill="#0431fa" opacity="0.55"/><rect x="1426.98" y="77.89" width="8.19" height="0.95" fill="#000000" opacity="0.55"/><rect x="1435.17" y="77.89" width="0.58" height="0.95" fill="#0431fa" opacity="0.55"/><rect x="1422.30" y="80.27" width="1.75" height="0.95" fill="#3434c8" opacity="0.55"/><rect x="1424.06" y="80.27" width="0.58" height="0.95" fill="#0431fa" opacity="0.55"/><rect x="1424.64" y="80.27" width="9.36" height="0.95" fill="#000000" opacity="0.55"/><rect x="1434.59" y="80.27" width="4.09" height="0.95" fill="#a31515" opacity="0.55"/><rect x="1438.68" y="80.27" width="0.58" height="0.95" fill="#0431fa" opacity="0.55"/><rect x="1422.30" y="81.46" width="1.75" height="0.95" fill="#3434c8" opacity="0.55"/><rect x="1424.06" y="81.46" width="0.58" height="0.95" fill="#0431fa" opacity="0.55"/><rect x="1424.64" y="81.46" width="8.77" height="0.95" fill="#000000" opacity="0.55"/><rect x="1434.00" y="81.46" width="7.02" height="0.95" fill="#a31515" opacity="0.55"/><rect x="1441.02" y="81.46" width="0.58" height="0.95" fill="#0431fa" opacity="0.55"/><rect x="1422.30" y="82.65" width="12.87" height="0.95" fill="#008000" opacity="0.55"/><rect x="1422.30" y="83.84" width="1.75" height="0.95" fill="#3434c8" opacity="0.55"/><rect x="1424.06" y="83.84" width="0.58" height="0.95" fill="#0431fa" opacity="0.55"/><rect x="1424.64" y="83.84" width="13.45" height="0.95" fill="#000000" opacity="0.55"/><rect x="1438.68" y="83.84" width="2.34" height="0.95" fill="#a31515" opacity="0.55"/><rect x="1441.61" y="83.84" width="2.92" height="0.95" fill="#a31515" opacity="0.55"/><rect x="1445.12" y="83.84" width="1.75" height="0.95" fill="#a31515" opacity="0.55"/><rect x="1446.87" y="83.84" width="0.58" height="0.95" fill="#0431fa" opacity="0.55"/><rect x="1422.30" y="86.22" width="7.02" height="0.95" fill="#3434c8" opacity="0.55"/><rect x="1429.32" y="86.22" width="0.58" height="0.95" fill="#0431fa" opacity="0.55"/><rect x="1429.90" y="86.22" width="3.51" height="0.95" fill="#000000" opacity="0.55"/><rect x="1434.00" y="86.22" width="4.68" height="0.95" fill="#000000" opacity="0.55"/><rect x="1439.26" y="86.22" width="5.85" height="0.95" fill="#000000" opacity="0.55"/><rect x="1424.64" y="87.41" width="3.51" height="0.95" fill="#000000" opacity="0.55"/><rect x="1424.64" y="88.60" width="4.68" height="0.95" fill="#000000" opacity="0.55"/><rect x="1424.64" y="89.79" width="7.60" height="0.95" fill="#000000" opacity="0.55"/><rect x="1424.64" y="90.98" width="4.68" height="0.95" fill="#000000" opacity="0.55"/><rect x="1424.64" y="92.17" width="1.17" height="0.95" fill="#000000" opacity="0.55"/><rect x="1424.64" y="93.36" width="5.26" height="0.95" fill="#000000" opacity="0.55"/><rect x="1424.64" y="94.55" width="0.58" height="0.95" fill="#0431fa" opacity="0.55"/><rect x="1422.30" y="96.93" width="7.02" height="0.95" fill="#3434c8" opacity="0.55"/><rect x="1429.32" y="96.93" width="0.58" height="0.95" fill="#0431fa" opacity="0.55"/><rect x="1429.90" y="96.93" width="3.51" height="0.95" fill="#000000" opacity="0.55"/><rect x="1434.00" y="96.93" width="4.68" height="0.95" fill="#000000" opacity="0.55"/><rect x="1438.68" y="96.93" width="0.58" height="0.95" fill="#0431fa" opacity="0.55"/><rect x="1422.30" y="99.31" width="0.58" height="0.95" fill="#008000" opacity="0.55"/><rect x="1423.47" y="99.31" width="8.77" height="0.95" fill="#008000" opacity="0.55"/><rect x="1432.83" y="99.31" width="9.36" height="0.95" fill="#008000" opacity="0.55"/><rect x="1442.77" y="99.31" width="11.11" height="0.95" fill="#008000" opacity="0.55"/><rect x="1422.30" y="101.69" width="7.02" height="0.95" fill="#3434c8" opacity="0.55"/><rect x="1429.32" y="101.69" width="0.58" height="0.95" fill="#0431fa" opacity="0.55"/><rect x="1429.90" y="101.69" width="2.92" height="0.95" fill="#000000" opacity="0.55"/><rect x="1433.41" y="101.69" width="4.68" height="0.95" fill="#000000" opacity="0.55"/><rect x="1438.10" y="101.69" width="0.58" height="0.95" fill="#0431fa" opacity="0.55"/><rect x="1422.30" y="104.07" width="11.11" height="0.95" fill="#3434c8" opacity="0.55"/><rect x="1433.41" y="104.07" width="0.58" height="0.95" fill="#0431fa" opacity="0.55"/><rect x="1434.00" y="104.07" width="0.58" height="0.95" fill="#2323b0" opacity="0.55"/><rect x="1434.59" y="104.07" width="0.58" height="0.95" fill="#319331" opacity="0.55"/><rect x="1435.17" y="104.07" width="11.11" height="0.95" fill="#2323b0" opacity="0.55"/><rect x="1446.28" y="104.07" width="0.58" height="0.95" fill="#319331" opacity="0.55"/><rect x="1447.45" y="104.07" width="0.58" height="0.95" fill="#2323b0" opacity="0.55"/><rect x="1448.04" y="104.07" width="0.58" height="0.95" fill="#319331" opacity="0.55"/><rect x="1448.62" y="104.07" width="10.53" height="0.95" fill="#2323b0" opacity="0.55"/><rect x="1459.15" y="104.07" width="0.58" height="0.95" fill="#319331" opacity="0.55"/><rect x="1459.74" y="104.07" width="0.58" height="0.95" fill="#0431fa" opacity="0.55"/><rect x="1422.30" y="106.45" width="1.75" height="0.95" fill="#3434c8" opacity="0.55"/><rect x="1424.06" y="106.45" width="0.58" height="0.95" fill="#0431fa" opacity="0.55"/><rect x="1424.64" y="106.45" width="9.95" height="0.95" fill="#000000" opacity="0.55"/><rect x="1435.17" y="106.45" width="0.58" height="0.95" fill="#2323b0" opacity="0.55"/><rect x="1435.75" y="106.45" width="0.58" height="0.95" fill="#319331" opacity="0.55"/><rect x="1436.34" y="106.45" width="10.53" height="0.95" fill="#2323b0" opacity="0.55"/><rect x="1446.87" y="106.45" width="0.58" height="0.95" fill="#319331" opacity="0.55"/><rect x="1447.45" y="106.45" width="3.51" height="0.95" fill="#000000" opacity="0.55"/><rect x="1450.96" y="106.45" width="0.58" height="0.95" fill="#0431fa" opacity="0.55"/><rect x="1422.30" y="107.64" width="7.02" height="0.95" fill="#3434c8" opacity="0.55"/><rect x="1429.32" y="107.64" width="0.58" height="0.95" fill="#0431fa" opacity="0.55"/><rect x="1429.90" y="107.64" width="3.51" height="0.95" fill="#000000" opacity="0.55"/><rect x="1433.41" y="107.64" width="0.58" height="0.95" fill="#0431fa" opacity="0.55"/><rect x="1422.30" y="108.83" width="11.11" height="0.95" fill="#3434c8" opacity="0.55"/><rect x="1433.41" y="108.83" width="0.58" height="0.95" fill="#0431fa" opacity="0.55"/><rect x="1423.47" y="110.02" width="0.58" height="0.95" fill="#2323b0" opacity="0.55"/><rect x="1424.06" y="110.02" width="0.58" height="0.95" fill="#319331" opacity="0.55"/><rect x="1424.64" y="110.02" width="11.11" height="0.95" fill="#2323b0" opacity="0.55"/><rect x="1435.75" y="110.02" width="0.58" height="0.95" fill="#319331" opacity="0.55"/><rect x="1423.47" y="111.21" width="0.58" height="0.95" fill="#2323b0" opacity="0.55"/><rect x="1424.06" y="111.21" width="0.58" height="0.95" fill="#319331" opacity="0.55"/><rect x="1424.64" y="111.21" width="10.53" height="0.95" fill="#2323b0" opacity="0.55"/><rect x="1435.17" y="111.21" width="0.58" height="0.95" fill="#319331" opacity="0.55"/><rect x="1422.30" y="112.40" width="0.58" height="0.95" fill="#0431fa" opacity="0.55"/><rect x="1422.30" y="114.78" width="8.19" height="0.95" fill="#000000" opacity="0.55"/><rect x="1430.49" y="114.78" width="1.17" height="0.95" fill="#0431fa" opacity="0.55"/><rect x="1422.30" y="117.16" width="8.19" height="0.95" fill="#3434c8" opacity="0.55"/><rect x="1430.49" y="117.16" width="0.58" height="0.95" fill="#0431fa" opacity="0.55"/><rect x="1431.08" y="117.16" width="8.19" height="0.95" fill="#000000" opacity="0.55"/><rect x="1424.64" y="118.35" width="12.87" height="0.95" fill="#000000" opacity="0.55"/><rect x="1424.64" y="119.54" width="10.53" height="0.95" fill="#000000" opacity="0.55"/><rect x="1424.64" y="120.73" width="9.95" height="0.95" fill="#000000" opacity="0.55"/><rect x="1424.64" y="121.92" width="13.45" height="0.95" fill="#000000" opacity="0.55"/><rect x="1424.64" y="123.11" width="24.57" height="0.95" fill="#000000" opacity="0.55"/><rect x="1424.64" y="124.30" width="18.72" height="0.95" fill="#000000" opacity="0.55"/><rect x="1424.64" y="125.49" width="20.47" height="0.95" fill="#000000" opacity="0.55"/><rect x="1424.64" y="126.68" width="21.64" height="0.95" fill="#000000" opacity="0.55"/><rect x="1424.64" y="127.87" width="13.45" height="0.95" fill="#000000" opacity="0.55"/><rect x="1424.64" y="129.06" width="16.96" height="0.95" fill="#000000" opacity="0.55"/><rect x="1424.64" y="130.25" width="22.81" height="0.95" fill="#000000" opacity="0.55"/><rect x="1424.64" y="131.44" width="15.21" height="0.95" fill="#000000" opacity="0.55"/><rect x="1424.64" y="132.63" width="18.72" height="0.95" fill="#000000" opacity="0.55"/><rect x="1424.64" y="133.82" width="15.79" height="0.95" fill="#000000" opacity="0.55"/><rect x="1424.64" y="135.01" width="20.47" height="0.95" fill="#000000" opacity="0.55"/><rect x="1424.64" y="136.20" width="0.58" height="0.95" fill="#0431fa" opacity="0.55"/><rect x="1422.30" y="138.58" width="12.29" height="0.95" fill="#3434c8" opacity="0.55"/><rect x="1434.59" y="138.58" width="0.58" height="0.95" fill="#0431fa" opacity="0.55"/><rect x="1435.17" y="138.58" width="8.19" height="0.95" fill="#000000" opacity="0.55"/><rect x="1443.94" y="138.58" width="0.58" height="0.95" fill="#2323b0" opacity="0.55"/><rect x="1444.53" y="138.58" width="0.58" height="0.95" fill="#319331" opacity="0.55"/><rect x="1445.12" y="138.58" width="9.36" height="0.95" fill="#2323b0" opacity="0.55"/><rect x="1454.47" y="138.58" width="0.58" height="0.95" fill="#319331" opacity="0.55"/><rect x="1456.23" y="138.58" width="0.58" height="0.95" fill="#2323b0" opacity="0.55"/><rect x="1456.82" y="138.58" width="0.58" height="0.95" fill="#319331" opacity="0.55"/><rect x="1457.40" y="138.58" width="6.43" height="0.95" fill="#2323b0" opacity="0.55"/><rect x="1463.84" y="138.58" width="0.58" height="0.95" fill="#319331" opacity="0.55"/><rect x="1465.00" y="138.58" width="0.58" height="0.95" fill="#2323b0" opacity="0.55"/><rect x="1465.59" y="138.58" width="0.58" height="0.95" fill="#319331" opacity="0.55"/><rect x="1466.17" y="138.58" width="8.77" height="0.95" fill="#2323b0" opacity="0.55"/><rect x="1474.95" y="138.58" width="0.58" height="0.95" fill="#319331" opacity="0.55"/><rect x="1475.53" y="138.58" width="0.58" height="0.95" fill="#0431fa" opacity="0.55"/></svg>
<div class="a" style="left:1488px;top:99px;width:12px;height:1px;background:#505050"></div>
<div class="a" style="left:1489px;top:100px;width:5px;height:7px;background:#7aa5d0"></div>
<div class="a" style="left:1494px;top:100px;width:6px;height:7px;background:#d9a78f"></div>
<svg style="left:0;top:0" width="1500" height="802">
<polygon points="174.00,79.00 192.66,81.20 186.88,82.91 243.32,121.49 242.68,122.51 183.18,88.85 184.20,94.78" fill="#ee1c25"/>
<polygon points="616.00,151.00 634.61,153.61 628.80,155.18 757.83,243.00 757.17,244.00 624.97,161.04 625.85,167.00" fill="#ee1c25"/>
</svg>
<div id="status" class="a"></div>
<div class="a" style="left:0;top:783px;width:122px;height:19px;background:#16825d"></div>
<svg style="left:10px;top:786px" width="11" height="12" viewBox="0 0 11 12" fill="none" stroke="#fff" stroke-width="1.1"><path d="M1 11 L5 7 L1 3 M10 1 L6 5 L10 9"/></svg>
<span class="t" style="left:24.00px;top:785.50px;font-size:10.5px;color:#fff;transform:scaleX(0.9696);transform-origin:0 0;">WSL: Ubuntu-18.04</span>
<svg style="left:130px;top:785px" width="12" height="14" viewBox="0 0 12 14" fill="none" stroke="#fff" stroke-width="1.1"><circle cx="2.5" cy="2.5" r="1.8"/><circle cx="9.5" cy="4.5" r="1.8"/><circle cx="2.5" cy="11.5" r="1.8"/><path d="M2.5 4.3 V9.7 M9.5 6.3 Q9.5 9 3.8 10.6"/></svg>
<span class="t" style="left:144.00px;top:785.50px;font-size:10.5px;color:#fff;">master*</span>
<svg style="left:195px;top:786px" width="13" height="12" viewBox="0 0 13 12" fill="none" stroke="#fff" stroke-width="1.1"><path d="M2 5 A4.5 4.5 0 0 1 10.5 4 M11 7 A4.5 4.5 0 0 1 2.5 8"/><path d="M8.5 4 H11 V1.5 M4.5 8 H2 V10.5"/></svg>
<svg style="left:222px;top:787px" width="11" height="10" viewBox="0 0 11 10" fill="none" stroke="#fff" stroke-width="1.1"><path d="M0.5 5.5 L3.8 9 L10.5 0.5"/></svg>
<span class="t" style="left:235.83px;top:785.50px;font-size:10.5px;color:#fff;transform:scaleX(0.9667);transform-origin:0 0;">ROS1.melodic</span>
<svg style="left:315px;top:786px" width="12" height="12" viewBox="0 0 12 12" fill="none" stroke="#fff" stroke-width="1.1"><circle cx="6" cy="6" r="5.3"/><path d="M3.8 3.8 L8.2 8.2 M8.2 3.8 L3.8 8.2"/></svg>
<span class="t" style="left:331.00px;top:785.50px;font-size:10.5px;color:#fff;transform:scaleX(0.7500);transform-origin:0 0;">0</span>
<svg style="left:339px;top:786px" width="13" height="12" viewBox="0 0 13 12" fill="none" stroke="#fff" stroke-width="1.1"><path d="M6.5 0.8 L12.2 11.2 H0.8 Z M6.5 4.5 V7.8 M6.5 9 V10"/></svg>
<span class="t" style="left:354.50px;top:785.50px;font-size:10.5px;color:#fff;transform:scaleX(0.7500);transform-origin:0 0;">0</span>
<svg style="left:373px;top:785px" width="14" height="14" viewBox="0 0 14 14" fill="none" stroke="#fff" stroke-width="1.1"><path d="M5 1.5 L13 6.5 L7 10.5 M5 1.5 V6"/><circle cx="4" cy="10" r="2.4"/><path d="M0.8 8.5 H7.2 M0.8 11.5 H7.2"/></svg>
<span class="t" style="left:388.66px;top:785.50px;font-size:10.5px;color:#fff;transform:scaleX(0.9390);transform-origin:0 0;">ROS: Launch (catkin_ws)</span>
<span class="t" style="left:1158.63px;top:785.50px;font-size:10.5px;color:#fff;transform:scaleX(0.9717);transform-origin:0 0;">Ln 4, Col 1 (29 selected)</span>
<span class="t" style="left:1282.97px;top:785.50px;font-size:10.5px;color:#fff;transform:scaleX(0.9333);transform-origin:0 0;">Spaces: 2</span>
<span class="t" style="left:1339.55px;top:785.50px;font-size:10.5px;color:#fff;transform:scaleX(0.9483);transform-origin:0 0;">UTF-8</span>
<span class="t" style="left:1381.09px;top:785.50px;font-size:10.5px;color:#fff;transform:scaleX(0.9091);transform-origin:0 0;">LF</span>
<span class="t" style="left:1402.00px;top:785.50px;font-size:10.5px;color:#fff;transform:scaleX(0.9697);transform-origin:0 0;">CMake</span>
<svg style="left:1448px;top:785px" width="14" height="14" viewBox="0 0 14 14" fill="none" stroke="#fff" stroke-width="1.1"><circle cx="5" cy="6" r="2.3"/><path d="M1 13 Q1.5 9 5 9 Q8.5 9 9 13"/><path d="M6 1 H13 V7 H10.5 L9 8.5 V7"/></svg>
<svg style="left:1476px;top:785px" width="11" height="14" viewBox="0 0 11 14" fill="none" stroke="#fff" stroke-width="1.1"><path d="M1 10.5 H10 L8.8 9 V5.5 A3.3 3.3 0 0 0 2.2 5.5 V9 Z M4 12.3 Q5.5 13.8 7 12.3"/></svg>
</body></html>
